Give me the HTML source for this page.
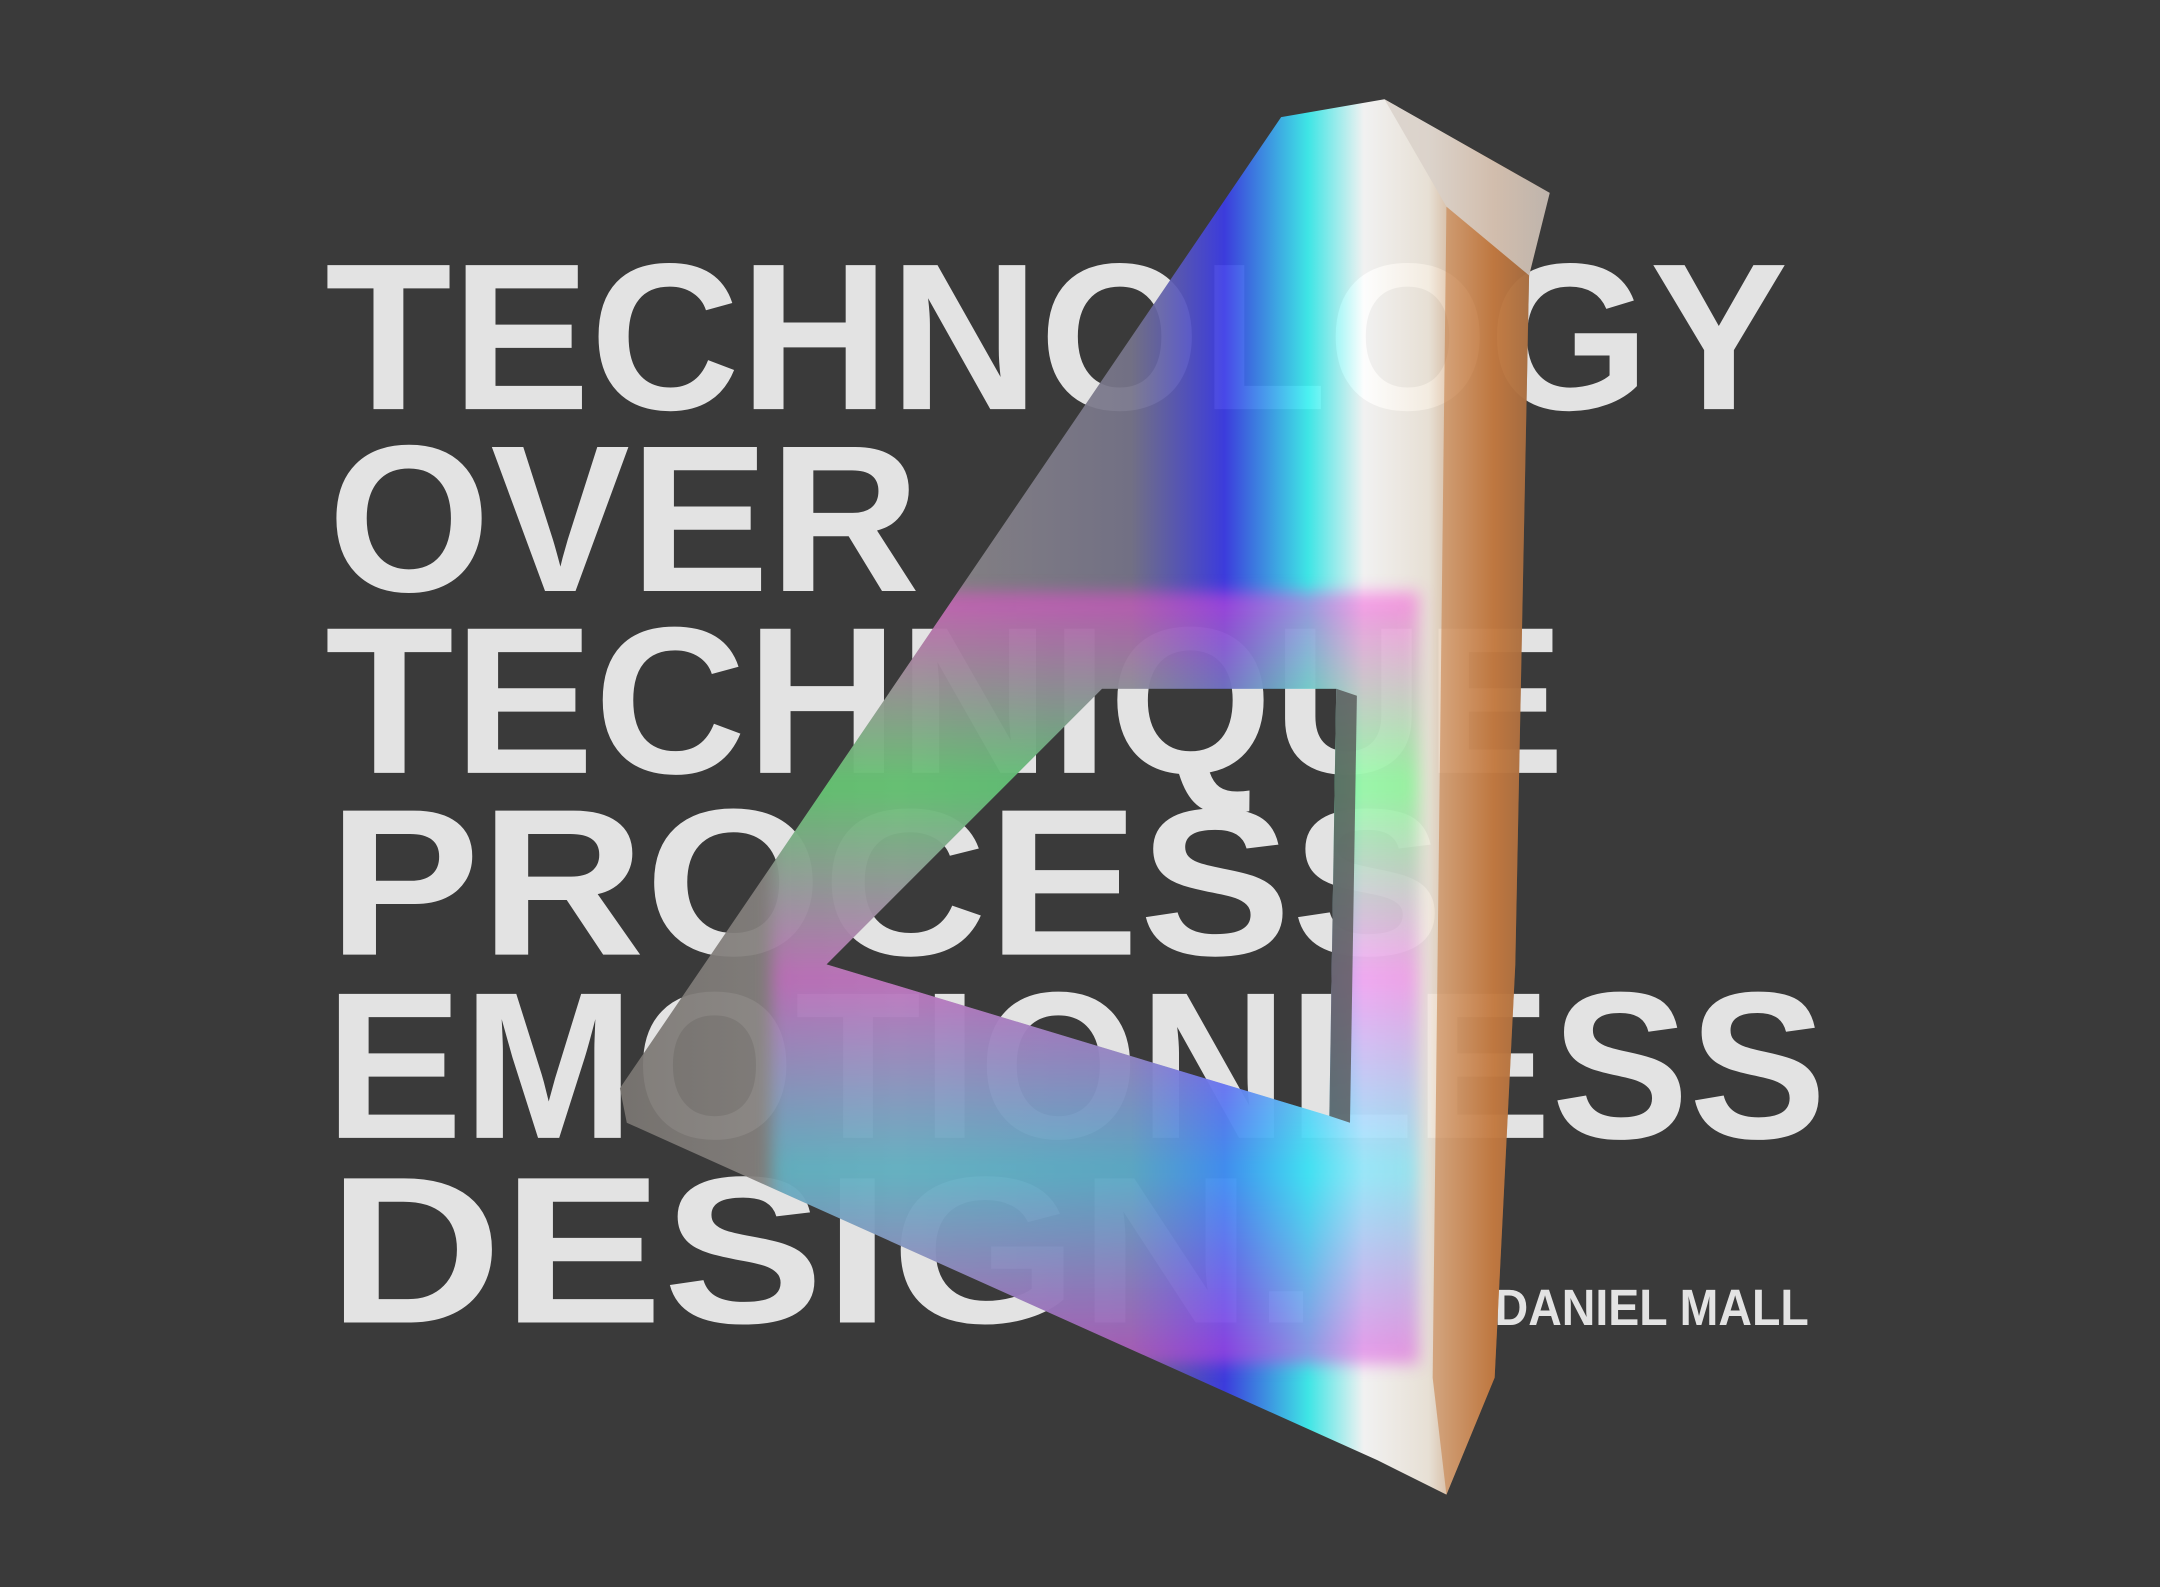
<!DOCTYPE html>
<html><head><meta charset="utf-8"><style>
html,body{margin:0;padding:0;background:#3a3a3a;overflow:hidden}
svg{display:block}
</style></head><body>
<svg width="2160" height="1587" viewBox="0 0 1568 1152" xmlns="http://www.w3.org/2000/svg">
<defs>
<linearGradient id="g1" gradientUnits="userSpaceOnUse" x1="450" y1="0" x2="1125" y2="0">
<stop offset="0" stop-color="#7a7672"/>
<stop offset="0.3" stop-color="#8e8a88"/>
<stop offset="0.55" stop-color="#76748a"/>
<stop offset="0.65" stop-color="#3c3ce8"/>
<stop offset="0.74" stop-color="#3ef2f2"/>
<stop offset="0.8" stop-color="#ffffff"/>
<stop offset="0.87" stop-color="#f4ece0"/>
<stop offset="0.94" stop-color="#c07840"/>
<stop offset="1" stop-color="#5a4a40"/>
</linearGradient>
<linearGradient id="g2" x1="0" y1="0" x2="0" y2="1">
<stop offset="0" stop-color="#ff40e0"/>
<stop offset="0.25" stop-color="#40ff60"/>
<stop offset="0.5" stop-color="#f060f0"/>
<stop offset="0.75" stop-color="#40e0ff"/>
<stop offset="1" stop-color="#e040e0"/>
</linearGradient>
<clipPath id="c4"><path d="M1005 72 L1125 140 L1110 200 L1100 700 L1085 1000 L1050 1085 L1000 1060 L455 815 L450 790 L930 85 Z M800 500 L970 500 L965 810 L600 700 Z" clip-rule="evenodd"/></clipPath>
<filter id="b"><feGaussianBlur stdDeviation="6"/></filter>
</defs>
<rect width="1568" height="1152" fill="#3a3a3a"/>
<g font-family="Liberation Sans, Arial, sans-serif" font-weight="700" font-size="152" fill="#e3e3e3">
<text x="236" y="297" textLength="1062" lengthAdjust="spacingAndGlyphs">TECHNOLOGY</text>
<text x="238" y="429" textLength="430" lengthAdjust="spacingAndGlyphs">OVER</text>
<text x="236" y="561" textLength="900" lengthAdjust="spacingAndGlyphs">TECHNIQUE</text>
<text x="238" y="693" textLength="810" lengthAdjust="spacingAndGlyphs">PROCESS</text>
<text x="236" y="826" textLength="1090" lengthAdjust="spacingAndGlyphs">EMOTIONLESS</text>
<text x="238" y="960" textLength="720" lengthAdjust="spacingAndGlyphs">DESIGN.</text>
<text x="1085" y="962" font-size="37" textLength="228" lengthAdjust="spacingAndGlyphs">DANIEL MALL</text>
</g>
<g>
<path d="M1005 72 L1125 140 L1110 200 L1100 700 L1085 1000 L1050 1085 L1000 1060 L455 815 L450 790 L930 85 Z M800 500 L970 500 L965 810 L600 700 Z" fill="url(#g1)" fill-rule="evenodd" opacity="0.93"/>
<g clip-path="url(#c4)">
<rect x="560" y="430" width="470" height="560" fill="url(#g2)" opacity="0.5" filter="url(#b)"/>
</g>
<path d="M1005 72 L1125 140 L1110 200 L1050 150 Z" fill="#d8d0c8" opacity="0.8"/>
<path d="M1050 150 L1110 200 L1100 700 L1085 1000 L1050 1085 L1040 1000 Z" fill="#c47a40" opacity="0.55"/>
<path d="M970 500 L985 505 L980 815 L965 810 Z" fill="#555" opacity="0.8"/>
</g>
</svg>
</body></html>
